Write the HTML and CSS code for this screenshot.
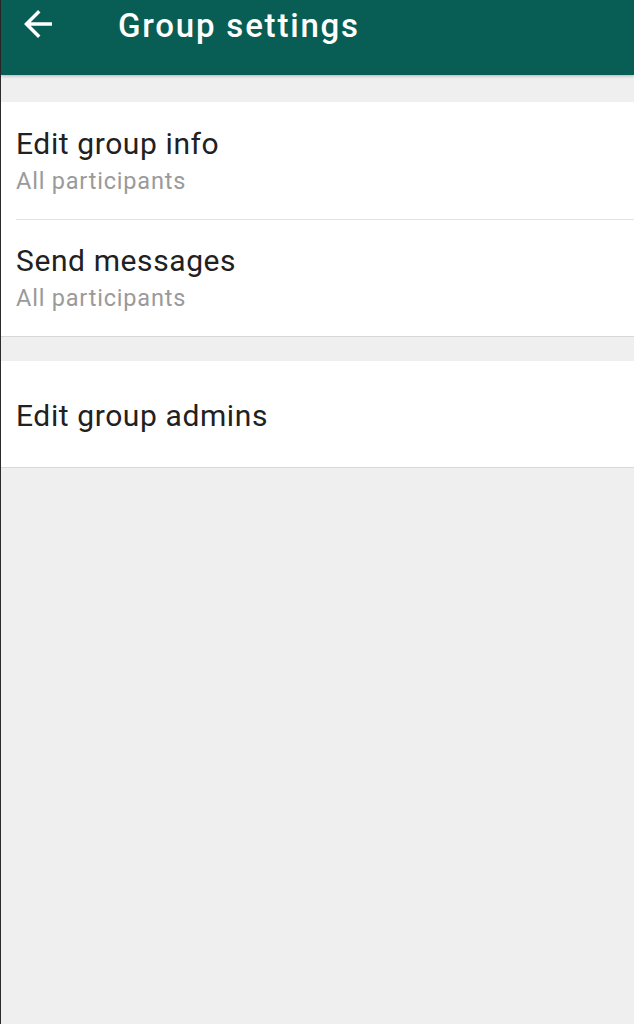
FILE: index.html
```html
<!DOCTYPE html>
<html lang="en">
<head>
<meta charset="utf-8">
<title>Group settings</title>
<link rel="stylesheet" href="styles.css">
</head>
<body>
<div class="screen">
  <header class="appbar">
    <svg class="back" viewBox="0 0 24 24" width="42" height="42" aria-hidden="true">
      <path d="M20 11H7.83l5.59-5.59L12 4l-8 8 8 8 1.41-1.41L7.83 13H20v-2z" fill="#ffffff"/>
    </svg>
    <h1 class="title">Group settings</h1>
  </header>
  <main class="content">
    <section class="card">
      <div class="item">
        <div class="item-title">Edit group info</div>
        <div class="item-sub">All participants</div>
      </div>
      <div class="item">
        <div class="item-title">Send messages</div>
        <div class="item-sub">All participants</div>
      </div>
    </section>
    <section class="card">
      <div class="item item-single">
        <div class="item-title">Edit group admins</div>
      </div>
    </section>
  </main>
</div>
</body>
</html>
```
FILE: styles.css
```css
* { box-sizing: border-box; }
html, body { margin: 0; padding: 0; }
body {
  background: #efefef;
  font-family: Roboto, "Noto Sans", sans-serif;
}
.screen {
  min-height: 1024px;
  border-left: 1px solid #2b2b2b;
  background: #efefef;
}
.appbar {
  height: 75px;
  background: #085e54;
  display: flex;
  align-items: flex-start;
  box-shadow: 0 1px 3px rgba(0,0,0,0.25);
  position: relative;
}
.back {
  display: block;
  margin-left: 16px;
  margin-top: 3px;
  flex: none;
}
.title {
  margin: 6px 0 0 59px;
  font-size: 33px;
  line-height: 40px;
  font-weight: 500;
  color: #ffffff;
  letter-spacing: 1.8px;
}
.content {
  padding-top: 27px;
  display: flex;
  flex-direction: column;
  gap: 24px;
}
.card {
  background: #ffffff;
  border-bottom: 1px solid #d8d8d8;
}
.item {
  padding: 25px 0 23px 15px;
  position: relative;
}
.item + .item::before {
  content: "";
  position: absolute;
  top: 0;
  left: 15px;
  right: 0;
  height: 1px;
  background: #e3e3e3;
}
.item-title {
  font-size: 30px;
  line-height: 34px;
  color: #212121;
  letter-spacing: 0.6px;
}
.item-sub {
  margin-top: 5px;
  font-size: 23.5px;
  line-height: 30px;
  color: #9a9a9a;
  letter-spacing: 0.8px;
}
.item-single {
  padding-top: 38px;
  padding-bottom: 34px;
}
```
